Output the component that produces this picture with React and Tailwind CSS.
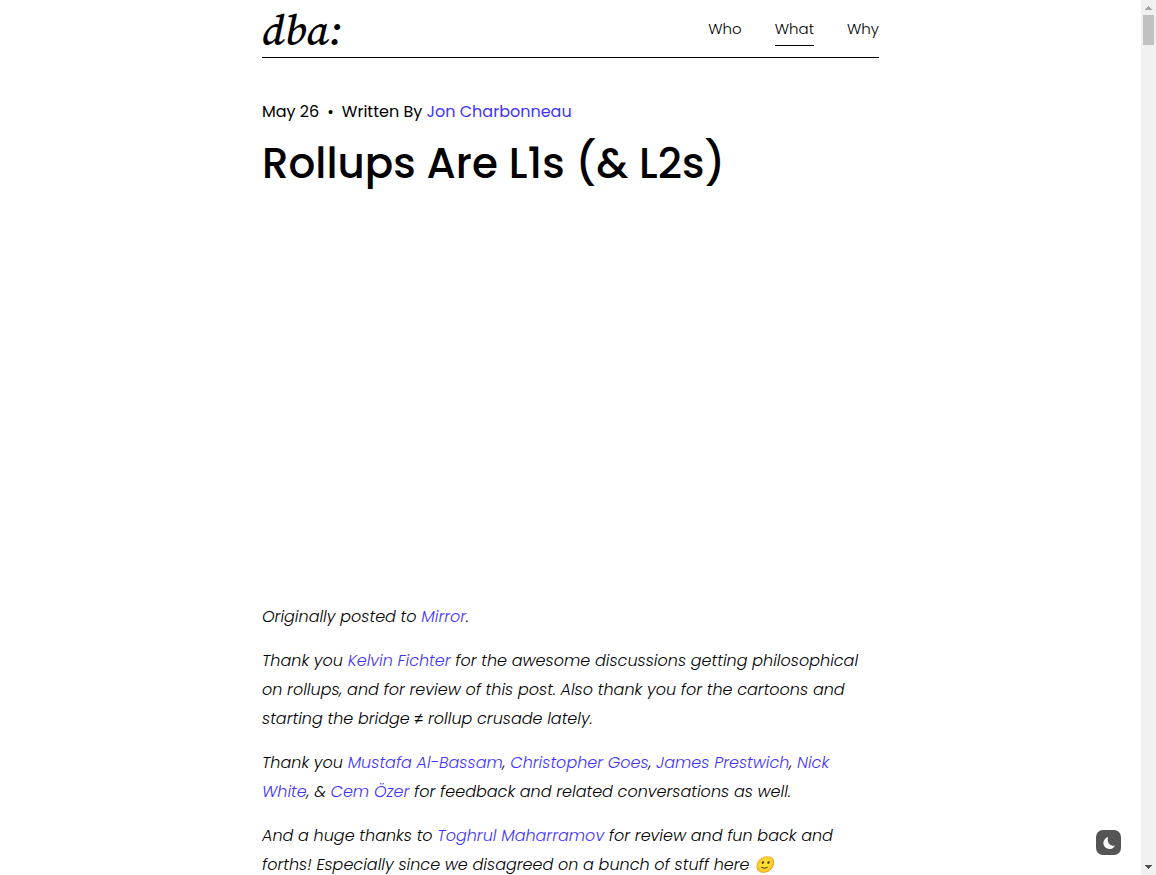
const navItems = [
  { label: 'Who', current: false },
  { label: 'What', current: true },
  { label: 'Why', current: false },
];

function TextLink({ children }) {
  return (
    <a href="#" className="text-[#3f33ff] hover:underline">
      {children}
    </a>
  );
}

function Header() {
  return (
    <header className="flex h-[58px] items-start justify-between border-b border-black">
      <a href="#" className="font-['Source_Serif_Pro','Source_Serif_4','Liberation_Serif',serif] text-[43px] leading-[60px] font-medium italic">
        dba:
      </a>
      <nav className="flex gap-[33px] pt-3 text-[15px]">
        {navItems.map((item) => (
          <a
            key={item.label}
            href="#"
            aria-current={item.current ? 'page' : undefined}
            className={
              item.current
                ? 'h-[34px] border-b border-black leading-[34px]'
                : 'h-[34px] border-b border-transparent leading-[34px]'
            }
          >
            {item.label}
          </a>
        ))}
      </nav>
    </header>
  );
}

function Scrollbar() {
  return (
    <div aria-hidden="true" className="flex w-[15px] shrink-0 flex-col items-center bg-[#f0f0f0]">
      <svg viewBox="0 0 15 15" className="size-[15px]">
        <path d="M4 10h7v-1h-1v-1h-1v-1h-1v-1h-1v1h-1v1h-1v1h-1z" fill="#a3a3a3" />
      </svg>
      <div className="h-[30px] w-[11px] bg-[#c1c1c1]" />
      <svg viewBox="0 0 15 15" className="mt-auto size-[15px]">
        <path d="M4 5h7v1h-1v1h-1v1h-1v1h-1v-1h-1v-1h-1v-1h-1z" fill="#505050" />
      </svg>
    </div>
  );
}

export default function App() {
  return (
    <div className="relative flex h-screen bg-white font-['Poppins','Liberation_Sans',sans-serif] font-light text-black">
      <main className="min-w-0 flex-1 overflow-hidden">
        <div className="mx-auto w-full max-w-[617px]">
          <Header />
          <article>
            <p className="mt-10 flex text-base leading-7 font-normal">
              <time>May 26</time>
              <span className="px-2">•</span>
              <span>
                Written By <TextLink>Jon Charbonneau</TextLink>
              </span>
            </p>
            <h1 className="mt-2 text-[42px] leading-[60px] font-medium">Rollups Are L1s (&amp; L2s)</h1>
            <div className="mt-[408px] flex flex-col gap-[15px] text-base leading-[29px] whitespace-nowrap italic">
              <p>
                Originally posted to <TextLink>Mirror</TextLink>.
              </p>
              <p>
                Thank you <TextLink>Kelvin Fichter</TextLink> for the awesome discussions getting philosophical
                <br />
                on rollups, and for review of this post. Also thank you for the cartoons and
                <br />
                starting the bridge <span className="font-['Liberation_Sans',sans-serif]">≠</span> rollup crusade lately.
              </p>
              <p>
                Thank you <TextLink>Mustafa Al-Bassam</TextLink>, <TextLink>Christopher Goes</TextLink>,{' '}
                <TextLink>James Prestwich</TextLink>,{' '}
                <TextLink>
                  Nick
                  <br />
                  White
                </TextLink>
                , &amp; <TextLink>Cem Özer</TextLink> for feedback and related conversations as well.
              </p>
              <p>
                And a huge thanks to <TextLink>Toghrul Maharramov</TextLink> for review and fun back and
                <br />
                forths! Especially since we disagreed on a bunch of stuff here 🙂
              </p>
            </div>
          </article>
        </div>
      </main>
      <Scrollbar />
      <button
        type="button"
        aria-label="Toggle dark mode"
        className="absolute right-[35px] bottom-5 flex size-[25px] items-center justify-center rounded-[7px] bg-[#555]"
      >
        <svg viewBox="0 0 14 14" className="size-3.5">
          <path d="M6.2 1 A6.1 6.1 0 1 0 13 9.6 C8.5 11 4.2 6 6.2 1 Z" fill="#fff" />
        </svg>
      </button>
    </div>
  );
}
